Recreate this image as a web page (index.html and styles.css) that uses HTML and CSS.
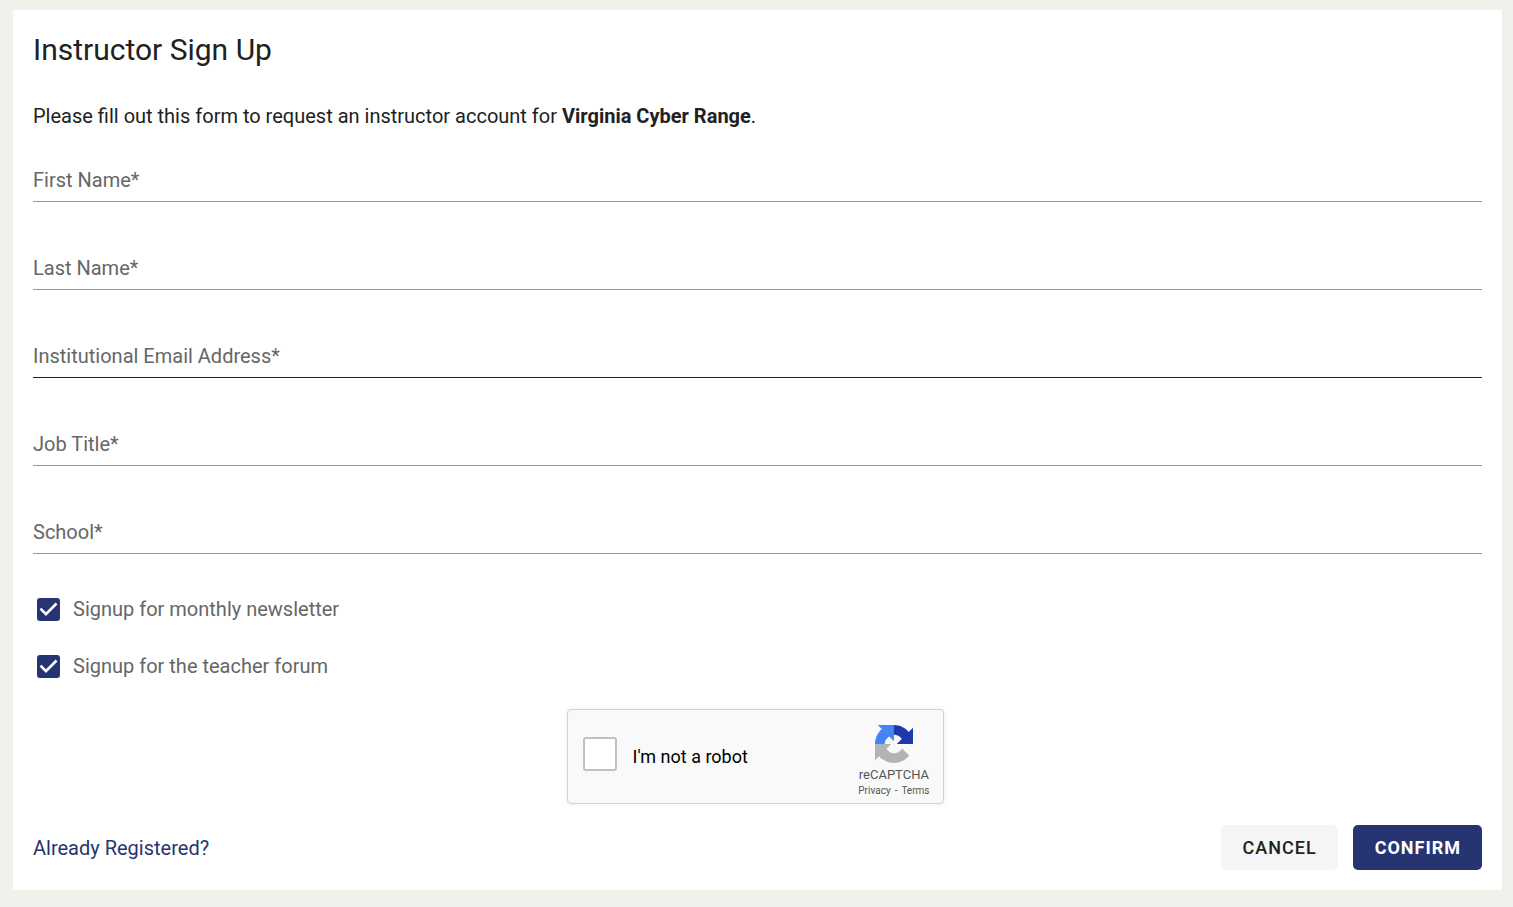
FILE: index.html
```html
<!DOCTYPE html>
<html lang="en">

<head>
  <meta charset="UTF-8" />
  <meta name="viewport" content="width=device-width, initial-scale=1.0" />
  <title>Instructor Sign Up</title>
  <link rel="stylesheet" href="styles.css">
</head>

<body>
  <main class="card">
    <h1 class="title">Instructor Sign Up</h1>
    <p class="intro">Please fill out this form to request an instructor account for <strong>Virginia Cyber Range</strong>.</p>

    <form>
      <div class="fields">
        <div class="field">
          <input type="text" id="first-name" placeholder=" " required>
          <label for="first-name">First Name*</label>
        </div>
        <div class="field">
          <input type="text" id="last-name" placeholder=" " required>
          <label for="last-name">Last Name*</label>
        </div>
        <div class="field active">
          <input type="email" id="email" placeholder=" " required>
          <label for="email">Institutional Email Address*</label>
        </div>
        <div class="field">
          <input type="text" id="job-title" placeholder=" " required>
          <label for="job-title">Job Title*</label>
        </div>
        <div class="field">
          <input type="text" id="school" placeholder=" " required>
          <label for="school">School*</label>
        </div>
      </div>

      <div class="options">
        <div class="option">
          <span class="checkbox">
            <input type="checkbox" id="newsletter" checked>
            <svg viewBox="3 3 18 18" aria-hidden="true"><path d="M10 17l-5-5 1.41-1.41L10 14.17l7.59-7.59L19 8l-9 9z"/></svg>
          </span>
          <label for="newsletter">Signup for monthly newsletter</label>
        </div>
        <div class="option">
          <span class="checkbox">
            <input type="checkbox" id="forum" checked>
            <svg viewBox="3 3 18 18" aria-hidden="true"><path d="M10 17l-5-5 1.41-1.41L10 14.17l7.59-7.59L19 8l-9 9z"/></svg>
          </span>
          <label for="forum">Signup for the teacher forum</label>
        </div>
      </div>

      <div class="captcha-wrap">
        <div class="captcha">
          <input type="checkbox" id="robot">
          <label for="robot">I'm not a robot</label>
          <div class="brand">
            <svg class="logo" viewBox="0 0 64 64" aria-hidden="true">
              <path fill="#1c3aa9" d="M64 31.955l-.033-1.37V4.687l-7.16 7.16C50.948 4.674 42.033.093 32.05.093c-10.4 0-19.622 4.96-25.458 12.64l11.736 11.86a15.55 15.55 0 0 1 4.754-5.334c2.05-1.6 4.952-2.906 8.968-2.906.485 0 .86.057 1.135.163 4.976.393 9.288 3.14 11.828 7.124l-8.307 8.307L64 31.953"/>
              <path fill="#4285f4" d="M31.862.094l-1.37.033H4.594l7.16 7.16C4.58 13.147 0 22.06 0 32.046c0 10.4 4.96 19.622 12.64 25.458L24.5 45.768a15.55 15.55 0 0 1-5.334-4.754c-1.6-2.05-2.906-4.952-2.906-8.968 0-.485.057-.86.163-1.135.393-4.976 3.14-9.288 7.124-11.828l8.307 8.307L31.86.095"/>
              <path fill="#b3b3b3" d="M.001 32.045l.033 1.37v25.898l7.16-7.16c5.86 7.173 14.774 11.754 24.76 11.754 10.4 0 19.622-4.96 25.458-12.64l-11.736-11.86a15.55 15.55 0 0 1-4.754 5.334c-2.05 1.6-4.952 2.906-8.968 2.906-.485 0-.86-.057-1.135-.163-4.976-.393-9.288-3.14-11.828-7.124l8.307-8.307c-10.522.04-22.4.066-27.295-.005"/>
            </svg>
            <div class="brand-name">reCAPTCHA</div>
            <div class="brand-links"><a href="#">Privacy</a><span>-</span><a href="#">Terms</a></div>
          </div>
        </div>
      </div>

      <div class="actions">
        <a class="registered" href="#">Already Registered?</a>
        <button type="button" class="btn">CANCEL</button>
        <button type="submit" class="btn primary">CONFIRM</button>
      </div>
    </form>
  </main>
</body>

</html>
```
FILE: styles.css
```css
* {
  box-sizing: border-box;
}

body {
  margin: 10px 11px 17px 13px;
  background-color: #f1f0eb;
  color: #212121;
  font-family: Roboto, "Liberation Sans", sans-serif;
  font-size: 20px;
  line-height: 30px;
}

a {
  text-decoration: none;
}

.card {
  padding: 20px;
  background-color: #fff;
}

.title {
  margin: 0 0 31px;
  font-size: 30px;
  font-weight: 400;
  line-height: 40px;
}

.intro {
  margin: 0 0 29px;
}

/* text fields */
.fields {
  display: grid;
  gap: 46px;
}

.field {
  display: grid;
}

.field input,
.field label {
  grid-area: 1 / 1;
}

.field input {
  width: 100%;
  height: 42px;
  padding: 0;
  border: 0;
  border-bottom: 1px solid #949494;
  outline: none;
  background: none;
  color: inherit;
  font: inherit;
}

.field label {
  color: #666;
  line-height: 40px;
  pointer-events: none;
}

.field input:not(:placeholder-shown) + label {
  visibility: hidden;
}

.field.active input,
.field input:focus {
  border-bottom-color: #212121;
}

/* newsletter and forum */
.options {
  display: grid;
  gap: 27px;
  margin: 40px 0 28px;
}

.option {
  display: flex;
  align-items: center;
  gap: 13px;
  padding-left: 4px;
  color: #666;
}

.checkbox {
  display: grid;
}

.checkbox input,
.checkbox svg {
  grid-area: 1 / 1;
  width: 23px;
  height: 23px;
}

.checkbox input {
  appearance: none;
  margin: 0;
  border: 2px solid #666;
  border-radius: 3px;
}

.checkbox input:checked {
  border-color: #263472;
  background-color: #263472;
}

.checkbox svg {
  fill: #fff;
  pointer-events: none;
}

/* captcha */
.captcha-wrap {
  display: flex;
  justify-content: center;
  padding-right: 5px;
}

.captcha {
  display: flex;
  align-items: center;
  width: 377px;
  height: 95px;
  padding: 0 13px 0 15px;
  border: 1px solid #d3d3d3;
  border-radius: 4px;
  background-color: #f9f9f9;
  box-shadow: 0 0 5px rgba(0, 0, 0, 0.08);
  color: #000;
  font-size: 18px;
}

.captcha input {
  appearance: none;
  width: 34px;
  height: 34px;
  margin: 0 16px 5px 0;
  border: 2px solid #c1c1c1;
  border-radius: 3px;
  background-color: #fff;
}

.captcha input:checked {
  background-color: #4285f4;
}

.brand {
  margin-left: auto;
  padding-top: 10px;
  color: #555;
  text-align: center;
}

.logo {
  display: block;
  width: 38px;
  height: 38px;
  margin: 0 auto 4px;
}

.brand-name {
  font-size: 13px;
  line-height: 16px;
}

.brand-links {
  display: flex;
  gap: 4px;
  font-size: 10px;
  line-height: 16px;
}

.brand-links a {
  color: inherit;
}

/* bottom row */
.actions {
  display: flex;
  align-items: center;
  gap: 15px;
  margin-top: 21px;
}

.registered {
  margin-right: auto;
  color: #263472;
}

.btn {
  height: 45px;
  padding: 0 21px 0 22px;
  border: 0;
  border-radius: 5px;
  background-color: #f5f5f5;
  color: #212121;
  font-family: inherit;
  font-size: 18px;
  font-weight: 500;
  letter-spacing: 1px;
}

.btn.primary {
  background-color: #263472;
  color: #fff;
  font-weight: 700;
}
```
